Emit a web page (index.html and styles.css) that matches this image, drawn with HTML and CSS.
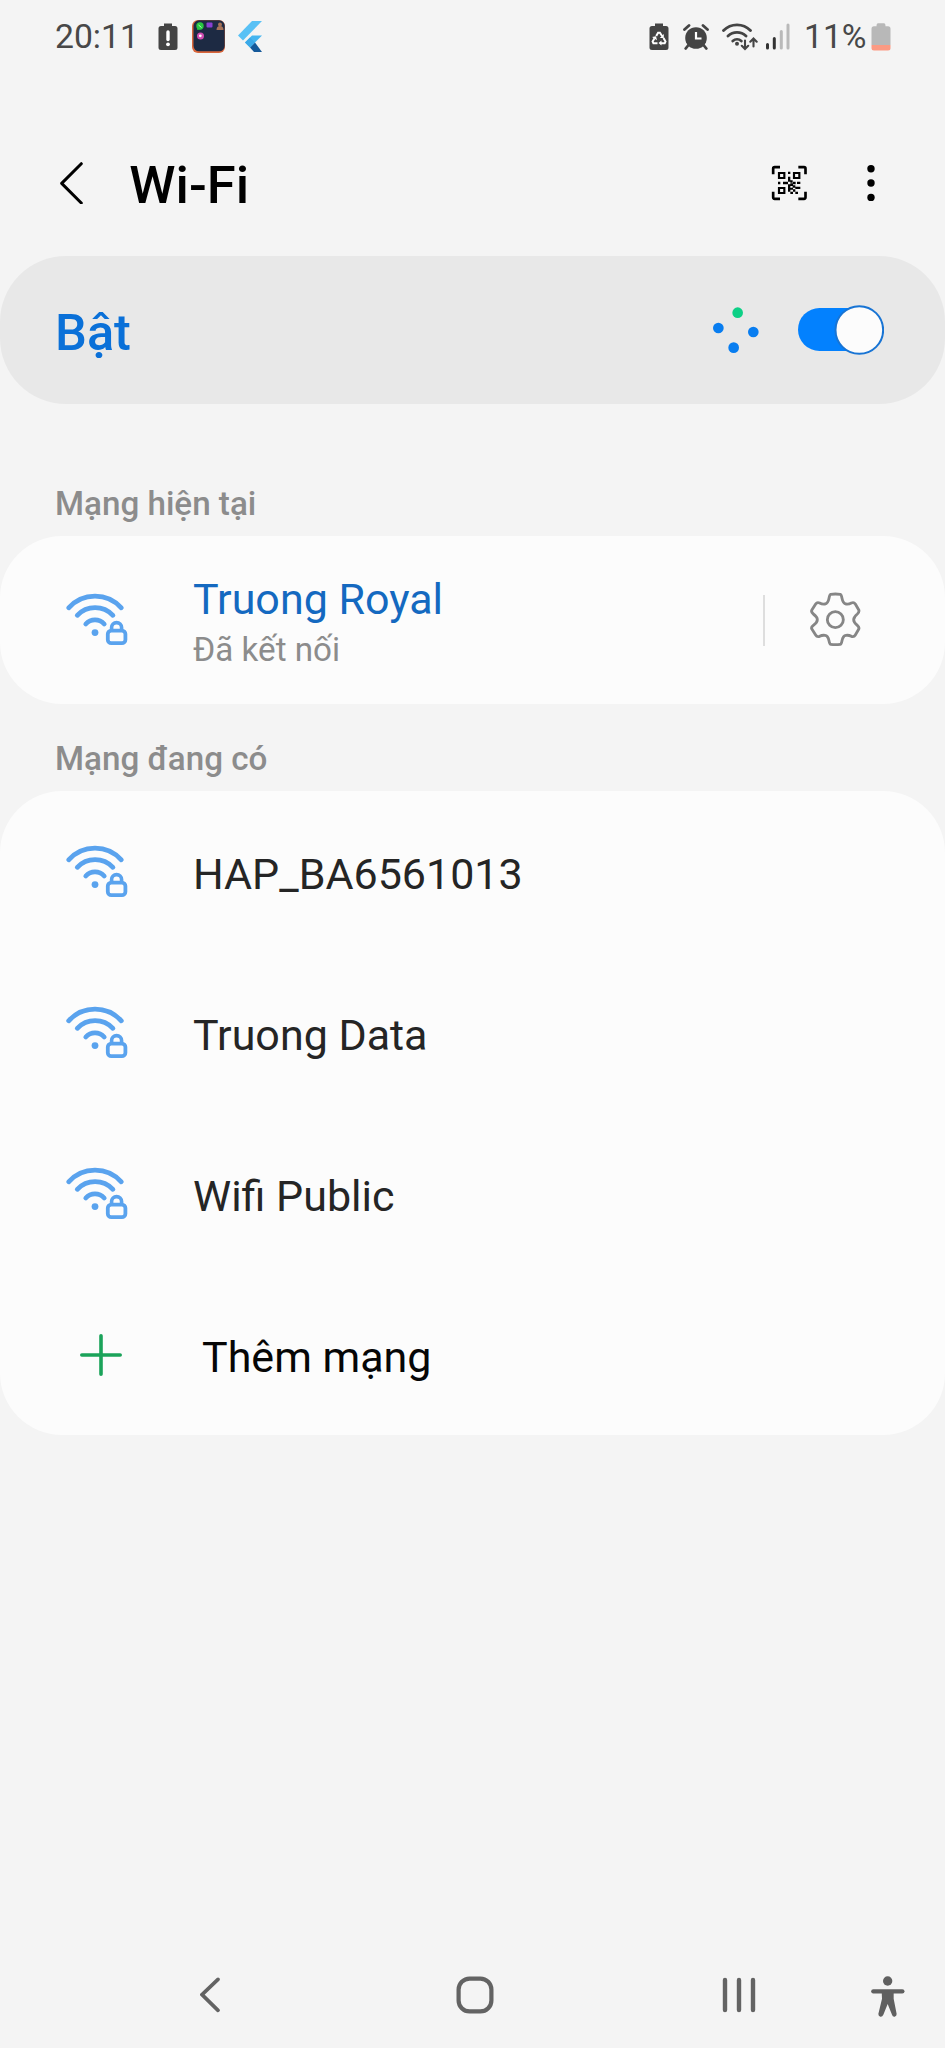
FILE: index.html
```
<!DOCTYPE html>
<html lang="vi">
<head>
<meta charset="utf-8">
<title>Wi-Fi</title>
<link rel="stylesheet" href="styles.css">
</head>
<body>
<svg class="defs" width="0" height="0" aria-hidden="true">
  <symbol id="wifi-lock" viewBox="64 843 66 56">
    <g fill="none" stroke="#5aa3ee" stroke-width="4.8" stroke-linecap="round">
      <path d="M68.7 859.8A35.4 35.4 0 0 1 121.3 859.8" />
      <path d="M77.3 867.3A24.4 24.4 0 0 1 112.9 867.3" />
      <path d="M85.8 876A12.5 12.5 0 0 1 104.2 876" />
      <rect x="107.8" y="882.6" width="17.6" height="12.6" rx="3.5" stroke-width="3.8" />
      <path d="M111.6 882V879.6A5 5 0 0 1 121.6 879.6V882" stroke-width="3.6" />
    </g>
    <circle cx="95" cy="884.6" r="3.4" fill="#5aa3ee" />
  </symbol>
</svg>
<div class="screen">
  <header class="status">
    <span class="time">20:11</span>
    <svg class="st-alert" viewBox="0 0 20 28" width="20" height="28"><path d="M6 .5h8V3h3a2.500 2.500 0 0 1 2.500 2.500v19A2.500 2.500 0 0 1 17 27H3a2.500 2.500 0 0 1-2.500-2.500v-19A2.500 2.500 0 0 1 3 3h3z" fill="#444" /><path d="M10 9v7.500" stroke="#fff" stroke-width="3.400" stroke-linecap="round" /><circle cx="10" cy="21.300" r="1.900" fill="#fff" /></svg>
    <svg class="st-app" viewBox="0 0 33 33" width="33" height="33"><rect width="33" height="33" rx="6" fill="#d9663b" /><rect x="1.500" y=".3" width="31.200" height="31" rx="5.500" fill="#1d2a43" /><circle cx="8" cy="6" r="3.700" fill="#28c840" /><path d="M5 10l1-4 3 3z" fill="#28c840" /><path d="M6.500 5l3 2.500" stroke="#b9f5c2" stroke-width="1" /><rect x="14.500" y="2.500" width="6" height="5" rx="1" fill="#8a3fd1" /><circle cx="28" cy="4.500" r="2" fill="#a87358" /><path d="M24.500 10q0-4 3.500-4t3.500 4z" fill="#a87358" /><circle cx="8.500" cy="16" r="3.500" fill="#d04bb0" /><circle cx="8.300" cy="15.800" r="1.400" fill="#fff" /></svg>
    <svg class="st-flutter" viewBox="0 0 24 31" width="24" height="31"><path d="M14 0h10L5 19.500 0 14.500z" fill="#59c1f5" /><path d="M14 14.500h10L12 26.500 7 21.500z" fill="#45b5f0" /><path d="M12 26.500l5-5L24 31h-8z" fill="#15599a" /><path d="M7 21.500l5-5 5 5-5 5z" fill="#3ba9e8" /></svg>
    <span class="spacer"></span>
    <svg class="st-recycle" viewBox="0 0 20 28" width="20" height="28"><path d="M6 .5h8V3h3a2.500 2.500 0 0 1 2.500 2.500v19A2.500 2.500 0 0 1 17 27H3a2.500 2.500 0 0 1-2.500-2.500v-19A2.500 2.500 0 0 1 3 3h3z" fill="#444" /><g fill="none" stroke="#fff" stroke-width="2"><path d="M7.200 13l1.900-3.300h1.800l2.300 3.500M14.500 15l2 3.600-.8 1.600H11.500M8.500 20.200H4.400l-.8-1.600 1.900-3.300" /></g><path d="M14.800 11v4h-4zM12.500 17.500v5l-3-2.500zM3 14l4-.7 1 4z" fill="#fff" /></svg>
    <svg class="st-alarm" viewBox="0 0 26 26" width="26" height="26"><circle cx="13" cy="14" r="10.800" fill="#444" /><path d="M1.500 5.500L6 1.500M24.500 5.500L20 1.500M5.500 21l-2.800 3.500M20.500 21l2.800 3.500" stroke="#444" stroke-width="2.800" stroke-linecap="round" /><path d="M13 8v6.500h5.500" fill="none" stroke="#fff" stroke-width="2.200" /></svg>
    <svg class="st-wifi" viewBox="722 22 36 29" width="36" height="29"><g fill="none" stroke="#444" stroke-width="2.800" stroke-linecap="round"><path d="M723.500 30.500A19 19 0 0 1 750.500 30.500M728 36A13 13 0 0 1 746 36M732.800 41A6.500 6.500 0 0 1 741.300 41" /><path d="M745 40.500v8M741.800 45.800l3.200 3.200 3.200-3.200M753.500 46.500v-7.500M750.300 41.700l3.200-3.200 3.200 3.200" stroke-width="2.100" /></g><circle cx="737" cy="43.800" r="2" fill="#444" /></svg>
    <svg class="st-signal" viewBox="765 23 26 27" width="26" height="27"><path d="M767.500 44.500v3.500M774.300 38.500v9.500" stroke="#333" stroke-width="3" stroke-linecap="round" /><path d="M781.300 31.500v16.500M788 25v23" stroke="#b9b9b9" stroke-width="3" stroke-linecap="round" /></svg>
    <span class="percent">11%</span>
    <svg class="st-battery" viewBox="0 0 20 28" width="20" height="28"><path d="M7 .3h6q1.500 0 1.500 3H17a2.500 2.500 0 0 1 2.500 2.500V22H.5V5.800A2.500 2.500 0 0 1 3 3.300h2.500q0-3 1.500-3z" fill="#b8b8b8" /><path d="M.5 22h19v3a2.500 2.500 0 0 1-2.500 2.500H3A2.500 2.500 0 0 1 .5 25z" fill="#fb9a83" /></svg>
  </header>

  <div class="titlebar">
    <svg class="back" viewBox="60 66 70 128" width="23.300" height="42.700"><path d="M124 71L65 130l59 59" fill="none" stroke="#000" stroke-width="9" stroke-linecap="round" stroke-linejoin="round" /></svg>
    <h1>Wi-Fi</h1>
    <span class="spacer"></span>
    <svg class="qr" viewBox="90 73 111 108" width="37" height="36"><g fill="none" stroke="#000"><path d="M96.500 101V84q0-4.500 4.500-4.500h16M172 79.500h17q4.500 0 4.500 4.500v17M193.500 153v17q0 4.500-4.500 4.500h-17M117 174.500h-16q-4.500 0-4.500-4.500v-17" stroke-width="8" /><path d="M114 97h16v15h-16zM159 97h16v15h-16zM114 142h16v15h-16z" stroke-width="6.500" /></g><path d="M141 93h7v7h-7zM141 108h7v15h-7zM111 123h7v8h-7zM126 123h15v8h-15zM148 119h7v7h-7zM156 123h8v8h-8zM168 123h10v7h-10zM141 131h7v22h-7zM148 128h8v8h-8zM155 134h8v7h-8zM148 141h8v6h-8zM163 138h15v7h-15zM156 146h7v7h-7zM148 153h8v7h-8zM163 153h8v7h-8z" fill="#000" /></svg>
    <svg class="more" viewBox="0 0 8 38" width="8" height="38"><circle cx="4" cy="4.700" r="3.700" /><circle cx="4" cy="19" r="3.700" /><circle cx="4" cy="33.400" r="3.700" /></svg>
  </div>

  <section class="switch-card">
    <span class="on">Bật</span>
    <span class="spacer"></span>
    <svg class="spinner" viewBox="68 169 138 139" width="46" height="46.300"><circle cx="142" cy="186" r="16" fill="#0dd086" /><g fill="#087df0"><circle cx="84" cy="232" r="16" /><circle cx="189" cy="244" r="16" /><circle cx="130" cy="291" r="16" /></g></svg>
    <svg class="toggle" viewBox="324 162 259 156" width="86.300" height="52"><rect x="324" y="174" width="240" height="129" rx="64.500" fill="#0381fe" /><circle cx="508" cy="240" r="71.500" fill="#fcfcfc" stroke="#1874d4" stroke-width="6" /></svg>
  </section>

  <h2 class="first">Mạng hiện tại</h2>
  <section class="card current">
    <svg class="wifi" width="66" height="56"><use href="#wifi-lock" /></svg>
    <div class="info"><div class="name">Truong Royal</div><div class="sub">Đã kết nối</div></div>
    <span class="spacer"></span>
    <span class="divider"></span>
    <svg class="gear" viewBox="205 96 159 165" width="53" height="55"><g fill="none" stroke="#868686" stroke-width="8.500" stroke-linejoin="round"><path d="M270 103Q284 101 299 103Q302 104 304 115Q307 131 316 132Q325 133 332 129Q340 126 344 132L354 149Q357 156 350 162Q339 171 339 179Q339 187 350 196Q357 202 354 208L344 225Q340 232 332 229Q325 225 316 226Q307 227 304 242Q302 253 299 253Q284 255 270 253Q267 253 265 242Q262 227 253 226Q244 225 237 229Q229 232 225 225L214 208Q210 202 218 196Q230 187 230 179Q230 171 218 162Q210 156 214 149L225 132Q229 126 237 129Q244 133 253 132Q262 131 265 115Q267 104 270 103Z" /><circle cx="284" cy="179" r="24" /></g></svg>
  </section>

  <h2>Mạng đang có</h2>
  <section class="card">
    <div class="row"><svg class="wifi" width="66" height="56"><use href="#wifi-lock" /></svg><span class="name">HAP_BA6561013</span></div>
    <div class="row"><svg class="wifi" width="66" height="56"><use href="#wifi-lock" /></svg><span class="name">Truong Data</span></div>
    <div class="row"><svg class="wifi" width="66" height="56"><use href="#wifi-lock" /></svg><span class="name">Wifi Public</span></div>
    <div class="row add"><svg class="plus" viewBox="0 0 42 42" width="42" height="42"><path d="M21 1.800v38.400M1.800 21h38.400" stroke="#1ba35a" stroke-width="3.600" stroke-linecap="round" /></svg><span class="name">Thêm mạng</span></div>
  </section>

  <nav class="navbar">
    <svg class="nav-back" viewBox="59 80 60 108" width="20" height="36"><path d="M113 87L65 133l48 47" fill="none" stroke="#636363" stroke-width="11" stroke-linecap="round" /></svg>
    <svg class="nav-home" viewBox="0 0 38 38" width="38" height="38"><rect x="2.600" y="2.600" width="32.800" height="32.800" rx="11" fill="none" stroke="#636363" stroke-width="4.200" /></svg>
    <svg class="nav-recent" viewBox="0 0 34 36" width="34" height="36"><path d="M3 3v30M17 3v30M31 3v30" stroke="#636363" stroke-width="4.400" stroke-linecap="round" /></svg>
    <svg class="nav-access" viewBox="544 80 102 124" width="34" height="41.300"><circle cx="594" cy="95" r="14" fill="#606060" /><path d="M551 126h87" stroke="#606060" stroke-width="13" stroke-linecap="round" /><path d="M576 126h36v22l9 46q0 7-6 8t-8-6l-13-32-13 32q-3 7-9 6t-6-8l11-46z" fill="#606060" /></svg>
  </nav>
</div>
</body>
</html>
```
FILE: styles.css
```
* { box-sizing: border-box; }
body { margin: 0; background: #f4f4f4; font-family: Roboto, "Noto Sans", sans-serif; }
svg { display: block; flex: none; }
.defs { position: absolute; }
.screen { width: 945px; height: 2048px; display: flex; flex-direction: column; overflow: hidden; }
.spacer { flex: 1; }
h1, h2 { margin: 0; font-weight: 500; }

.status { height: 73px; display: flex; align-items: center; padding-right: 54px; color: #484848; font-size: 33.7px; }
.time { width: 103px; margin-left: 55px; white-space: nowrap; }
.st-app { margin-left: 14px; }
.st-flutter { margin-left: 13px; }
.st-alarm { margin-left: 14px; }
.st-wifi { margin-left: 13px; }
.st-signal { margin-left: 7px; }
.percent { width: 67px; margin-left: 13px; white-space: nowrap; }

.titlebar { height: 183px; padding: 37px 70px 0 60px; display: flex; align-items: center; }
h1 { font-size: 52.5px; line-height: 62px; margin: 3px 0 0 46px; }
.more { margin-left: 59px; }

.switch-card { height: 148px; border-radius: 66px; background: #e8e8e8; display: flex; align-items: center; padding: 0 61px 0 55px; }
.on { font-size: 50.5px; line-height: 60px; font-weight: 500; color: #0a70d8; margin-top: 5px; }
.toggle { margin-left: 39px; }

h2 { height: 87px; padding: 33px 0 0 55px; font-size: 33.2px; line-height: 44px; color: #8c8c8c; }
h2.first { height: 132px; padding-top: 78px; }
.card { background: #fcfcfc; border-radius: 62px; }
.wifi { margin: 0 0 2px 64px; }
.name { font-size: 43px; line-height: 50px; color: #252525; white-space: nowrap; }
.current { height: 168px; display: flex; align-items: center; padding-right: 83px; }
.info { margin-left: 63px; margin-top: 6px; }
.info .name { color: #1469c0; }
.sub { font-size: 33.2px; line-height: 44px; margin-top: 4px; color: #8c8c8c; }
.divider { width: 2px; height: 51px; background: #dedede; }
.gear { margin: 0 0 2px 44px; }
.row { height: 161px; display: flex; align-items: center; }
.row .name { margin: 4px 0 0 63px; }
.plus { margin-left: 80px; }
.row.add .name { margin-left: 80px; color: #060606; }

.navbar { margin-top: auto; height: 106px; display: flex; align-items: center; padding-left: 200px; }
.nav-home { margin-left: 236px; }
.nav-recent { margin-left: 228px; }
.nav-access { margin-left: 115px; margin-top: 4px; }
```
